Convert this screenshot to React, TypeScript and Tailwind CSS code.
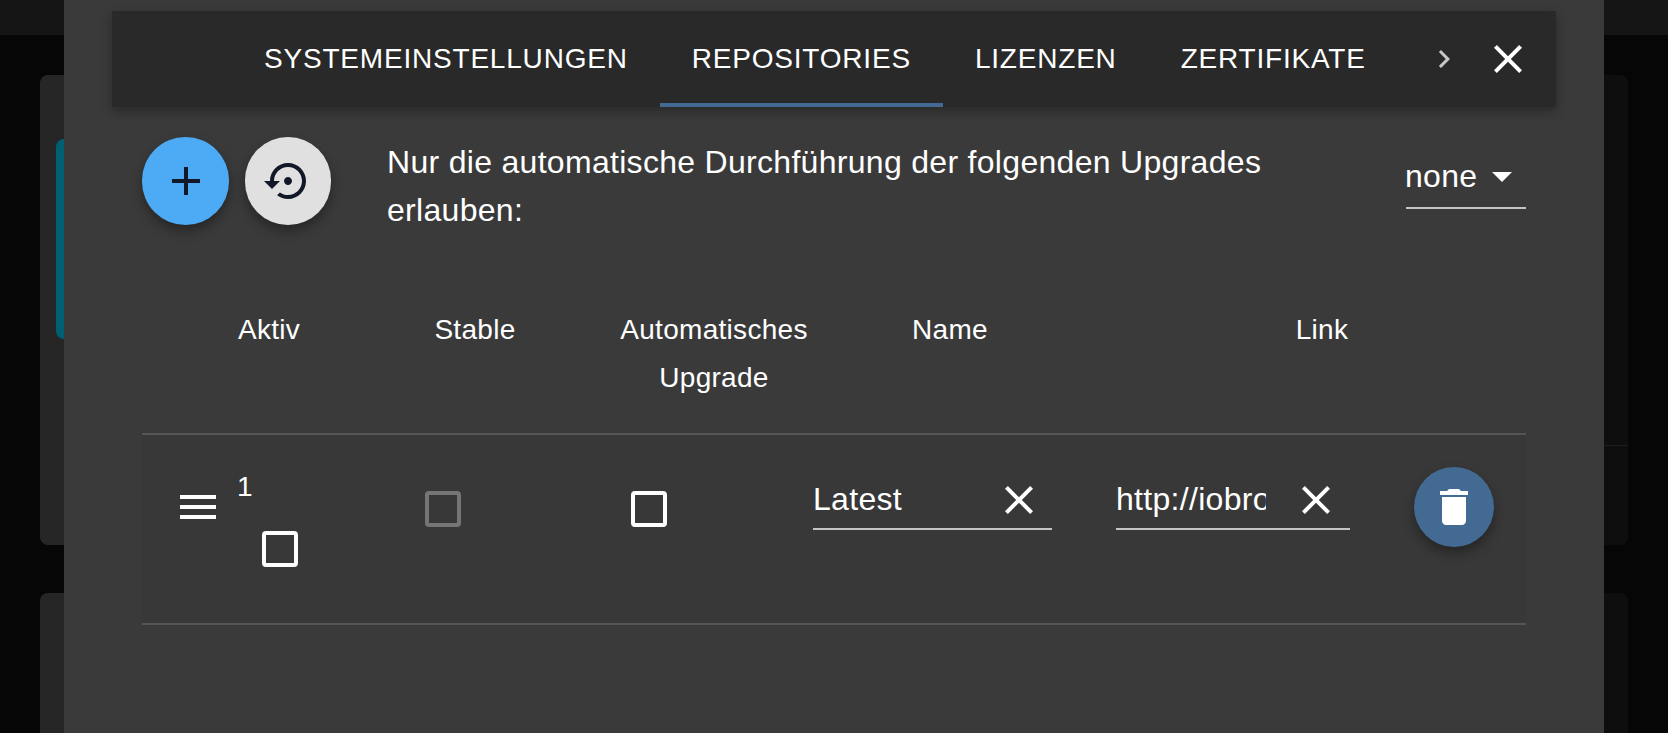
const ICONS = {
    add: 'M19 13h-6v6h-2v-6H5v-2h6V5h2v6h6v2z',
    restore:
        'M14 12c0-1.1-.9-2-2-2s-2 .9-2 2 .9 2 2 2 2-.9 2-2zm-2-9c-4.97 0-9 4.03-9 9H0l4 4 4-4H5c0-3.87 3.13-7 7-7s7 3.13 7 7-3.13 7-7 7c-1.51 0-2.91-.49-4.06-1.3l-1.42 1.44C8.04 20.3 9.94 21 12 21c4.97 0 9-4.03 9-9s-4.03-9-9-9z',
    close: 'M19 6.41L17.59 5 12 10.59 6.41 5 5 6.41 10.59 12 5 17.59 6.41 19 12 13.41 17.59 19 19 17.59 13.41 12 19 6.41z',
    chevron: 'M8.59 16.59L13.17 12 8.59 7.41 10 6l6 6-6 6-1.41-1.41z',
    caret: 'M7 10l5 5 5-5z',
    trash: 'M6 19c0 1.1.9 2 2 2h8c1.1 0 2-.9 2-2V7H6v12zM19 4h-3.5l-1-1h-5l-1 1H5v2h14V4z',
};

function Icon({ d, className }: { d: string; className: string }) {
    return (
        <svg className={className} viewBox="0 0 24 24" fill="currentColor">
            <path d={d} />
        </svg>
    );
}

function Checkbox({ muted }: { muted?: boolean }) {
    return (
        <div
            className={`w-[36px] h-[36px] rounded-[4px] border-[4px] ${
                muted ? 'border-[#757575]' : 'border-white'
            }`}
        />
    );
}

function ClearableInput({ value, className }: { value: string; className: string }) {
    return (
        <div className={`h-[60px] flex items-center border-b-2 border-[#c4c4c4] ${className}`}>
            <div className="flex-1 min-w-0 overflow-hidden whitespace-nowrap text-[32px] tracking-[0.3px]">
                {value}
            </div>
        </div>
    );
}

function Card({ teal }: { teal?: boolean }) {
    return (
        <div className="h-[470px] rounded-lg bg-linear-to-r from-[#262626] from-50% to-[#0e0e0e] to-50% overflow-hidden">
            {teal && (
                <>
                    <div className="mt-[64px] ml-4 w-[300px] h-[200px] rounded-lg bg-[#005f73]" />
                    <div className="mt-[106px] ml-[50%] h-px bg-[#1e1e1e]" />
                </>
            )}
        </div>
    );
}

export default function App() {
    return (
        <div
            className="relative h-screen overflow-hidden bg-[#060606] text-white"
            style={{ fontFamily: '"Liberation Sans", Arial, sans-serif' }}
        >
            {/* page behind the dialog */}
            <div className="h-[35px] bg-[#151515]" />
            <div className="flex flex-col gap-[48px] mt-[40px] mx-[40px]">
                <Card teal />
                <Card />
            </div>

            <div className="absolute inset-y-0 left-16 w-[1540px] bg-[#3a3a3a] px-[48px] pt-[11px]">
                <div className="h-[96px] bg-[#292929] shadow-[0_4px_10px_rgba(0,0,0,0.3)] flex pl-[120px] relative">
                    <div className="h-full flex items-center px-8 text-[28px] tracking-[0.8px]">
                        SYSTEMEINSTELLUNGEN
                    </div>
                    <div className="h-full flex items-center px-8 text-[28px] tracking-[0.8px] border-b-4 border-[#436a93] pt-[4px]">
                        REPOSITORIES
                    </div>
                    <div className="h-full flex items-center px-8 text-[28px] tracking-[0.8px]">
                        LIZENZEN
                    </div>
                    <div className="h-full flex items-center px-8 text-[28px] tracking-[0.8px]">
                        ZERTIFIKATE
                    </div>
                    <div className="h-full w-[80px] ml-[6px] flex items-center justify-center text-[#c8c8c8]">
                        <Icon d={ICONS.chevron} className="w-[36px] h-[36px]" />
                    </div>
                    <Icon d={ICONS.close} className="w-[48px] h-[48px] mt-[24px]" />
                </div>

                <div className="px-[30px]">
                    <div className="flex items-start mt-[30px]">
                        <div className="w-[87px] h-[88px] rounded-full bg-[#4dabf5] text-[#111827] flex items-center justify-center shadow-[0_6px_12px_rgba(0,0,0,0.35)]">
                            <Icon d={ICONS.add} className="w-[48px] h-[48px]" />
                        </div>
                        <div className="w-[86px] h-[88px] ml-[16px] rounded-full bg-[#e0e0e0] text-[#111827] flex items-center justify-center shadow-[0_6px_12px_rgba(0,0,0,0.35)]">
                            <Icon d={ICONS.restore} className="w-[48px] h-[48px]" />
                        </div>
                        <div className="w-[900px] ml-[56px] text-[32px] leading-[48px] tracking-[0.3px] mt-[1px]">
                            Nur die automatische Durchführung der folgenden Upgrades erlauben:
                        </div>
                        <div className="w-[120px] h-[72px] ml-[119px] border-b-2 border-[#c4c4c4] flex items-center justify-between">
                            <span className="text-[32px] tracking-[0.3px] mt-[7px] -ml-px">none</span>
                            <Icon d={ICONS.caret} className="w-[48px] h-[48px] mt-[8px]" />
                        </div>
                    </div>

                    <div className="flex mt-[71px] pt-px h-[130px] text-[28px] leading-[48px] tracking-[0.3px] text-center border-b-2 border-[#555555]">
                        <div className="w-[254px]">Aktiv</div>
                        <div className="w-[158px]">Stable</div>
                        <div className="w-[320px]">
                            Automatisches
                            <br />
                            Upgrade
                        </div>
                        <div className="w-[152px]">Name</div>
                        <div className="w-[408px] ml-[92px]">Link</div>
                    </div>

                    <div className="flex items-start h-[190px] bg-[#383838] border-b-2 border-[#555555] pl-[38px]">
                        <div className="w-[36px] mt-[60px] flex flex-col gap-[6px]">
                            <div className="h-[4px] bg-white" />
                            <div className="h-[4px] bg-white" />
                            <div className="h-[4px] bg-white" />
                        </div>
                        <div className="w-[188px] ml-[21px] mt-[40px] text-[28px] leading-[24px]">
                            1
                            <div className="ml-[25px] mt-[32px]">
                                <Checkbox />
                            </div>
                        </div>
                        <div className="w-[206px] mt-[56px]">
                            <Checkbox muted />
                        </div>
                        <div className="w-[182px] mt-[56px]">
                            <Checkbox />
                        </div>
                        <div className="relative w-[239px] mt-[35px]">
                            <ClearableInput value="Latest" className="w-full" />
                            <Icon d={ICONS.close} className="absolute left-[182px] top-[6px] w-[48px] h-[48px]" />
                        </div>
                        <div className="relative w-[234px] ml-[64px] mt-[35px]">
                            <ClearableInput value="http://iobroker.live" className="w-full pr-[84px]" />
                            <Icon d={ICONS.close} className="absolute left-[176px] top-[6px] w-[48px] h-[48px]" />
                        </div>
                        <div className="w-[80px] h-[80px] ml-[64px] mt-[32px] rounded-full bg-[#436a93] flex items-center justify-center shadow-[0_6px_12px_rgba(0,0,0,0.35)]">
                            <Icon d={ICONS.trash} className="w-[48px] h-[48px]" />
                        </div>
                    </div>
                </div>
            </div>
        </div>
    );
}
